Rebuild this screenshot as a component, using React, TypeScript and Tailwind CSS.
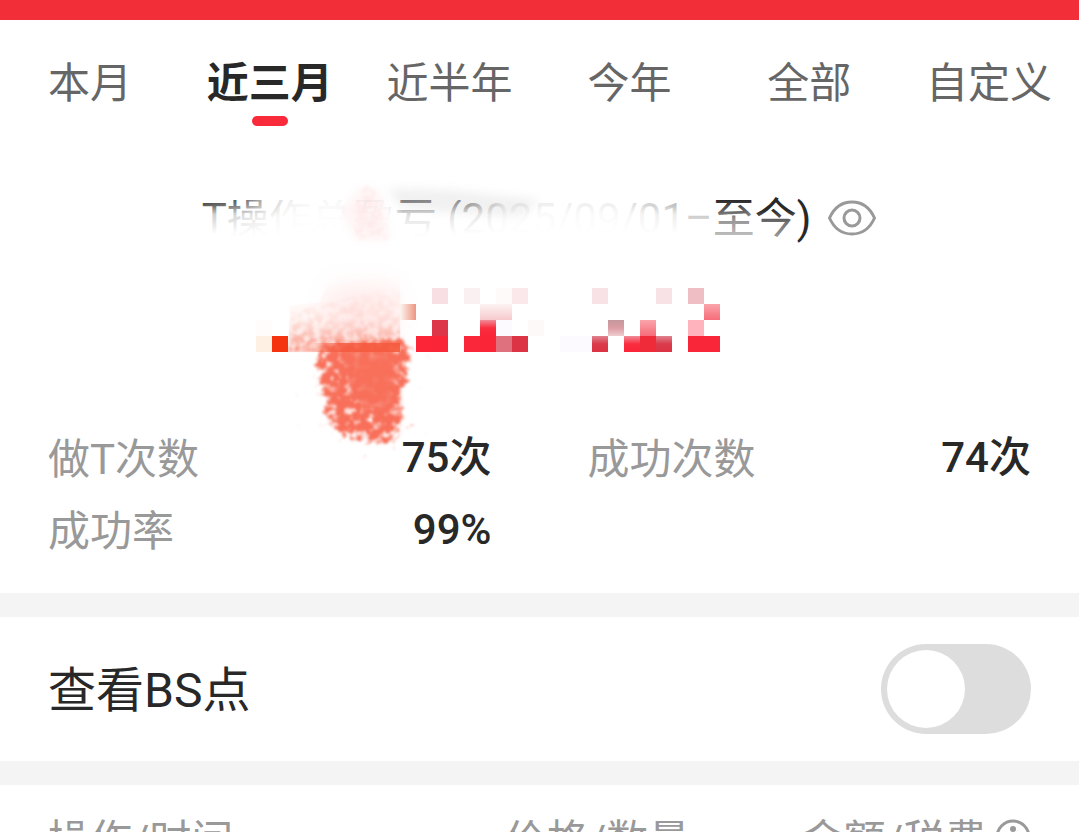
import { useState } from "react";

const tabs = ["本月", "近三月", "近半年", "今年", "全部", "自定义"];

const stats = [
  { label: "做T次数", value: "75次" },
  { label: "成功次数", value: "74次" },
  { label: "成功率", value: "99%" },
];

// x, y, fill of each 16px mosaic tile
const tiles: [number, number, string][] = [
  [432, 288, "#f7dfe3"], [464, 288, "#fbf0f1"], [496, 288, "#fefafa"], [512, 288, "#fae8ea"],
  [592, 288, "#f9e2e5"], [656, 288, "#f9e2e6"], [688, 288, "#efbec4"],
  [400, 304, "url(#tile-warm)"], [480, 304, "url(#tile-pale)"], [496, 304, "url(#tile-pale)"], [704, 304, "url(#tile-rose)"],
  [256, 320, "#fffcfb"], [432, 320, "#dc3648"], [480, 320, "url(#tile-red)"], [496, 320, "#fdfaff"], [528, 320, "#fdf9f8"],
  [608, 320, "url(#tile-mauve)"], [640, 320, "url(#tile-rose)"], [688, 320, "#ffb3bc"],
  [256, 336, "#fff0e4"], [272, 336, "#f5330f"], [416, 336, "#fc2437"], [432, 336, "#fb2538"],
  [464, 336, "#f92739"], [480, 336, "#fb2538"], [496, 336, "#df717f"], [512, 336, "#dc3444"],
  [560, 336, "#fdfaff"], [576, 336, "#fdfaff"], [592, 336, "url(#tile-crimson)"],
  [624, 336, "url(#tile-red)"], [640, 336, "#ef2b39"], [656, 336, "url(#tile-crimson)"],
  [688, 336, "#f82638"], [704, 336, "#f82638"],
];

function Smudge() {
  return (
    <svg
      aria-hidden="true"
      viewBox="180 170 720 290"
      className="pointer-events-none absolute left-1/2 top-0 h-[290px] w-[720px] -translate-x-1/2"
    >
      <defs>
        <filter id="grain" x="-10%" y="-10%" width="120%" height="120%">
          <feTurbulence type="fractalNoise" baseFrequency="0.14" numOctaves="3" seed="4" result="n" />
          <feColorMatrix in="n" type="matrix" values="0 0 0 0 0  0 0 0 0 0  0 0 0 0 0  4 0 0 0 -1.5" result="a" />
          <feComposite in="SourceGraphic" in2="a" operator="in" />
          <feGaussianBlur stdDeviation="1" />
        </filter>
        <filter id="mottle" x="-20%" y="-20%" width="140%" height="140%">
          <feTurbulence type="fractalNoise" baseFrequency="0.13" numOctaves="3" seed="11" result="n" />
          <feGaussianBlur in="SourceAlpha" stdDeviation="5" result="b" />
          <feColorMatrix in="n" type="matrix" values="0 0 0 0 0  0 0 0 0 0  0 0 0 0 0  1 0 0 0 0" result="na" />
          <feComposite in="b" in2="na" operator="arithmetic" k1="0" k2="1.9" k3="3" k4="-2.4" result="m" />
          <feFlood floodColor="#f8705a" />
          <feComposite in2="m" operator="in" />
          <feGaussianBlur stdDeviation="1.2" />
        </filter>
        <filter id="soft" x="-40%" y="-50%" width="180%" height="200%">
          <feGaussianBlur stdDeviation="14" />
        </filter>
        <filter id="haze" x="-30%" y="-80%" width="160%" height="260%">
          <feGaussianBlur stdDeviation="5" />
        </filter>
        <linearGradient id="fade-down" x1="0" y1="0" x2="0" y2="1">
          <stop offset="0" stopColor="#fff" stopOpacity="0" />
          <stop offset="0.15" stopColor="#fff" stopOpacity="0.2" />
          <stop offset="0.4" stopColor="#fff" stopOpacity="0.75" />
          <stop offset="0.9" stopColor="#fff" stopOpacity="0.98" />
        </linearGradient>
        <linearGradient id="fade-end" x1="0" y1="0" x2="0" y2="1">
          <stop offset="0" stopColor="#fff" stopOpacity="0" />
          <stop offset="0.4" stopColor="#fff" stopOpacity="0.5" />
          <stop offset="1" stopColor="#fff" stopOpacity="0.85" />
        </linearGradient>
        <linearGradient id="fade-right" x1="0" y1="0" x2="1" y2="0">
          <stop offset="0" stopColor="#fff" stopOpacity="0" />
          <stop offset="0.1" stopColor="#fff" stopOpacity="0.25" />
          <stop offset="0.16" stopColor="#fff" stopOpacity="0.75" />
          <stop offset="0.23" stopColor="#fff" stopOpacity="0.93" />
          <stop offset="0.4" stopColor="#fff" stopOpacity="0.93" />
          <stop offset="0.43" stopColor="#fff" stopOpacity="0.4" />
          <stop offset="0.56" stopColor="#fff" stopOpacity="0.5" />
          <stop offset="0.64" stopColor="#fff" stopOpacity="0.92" />
          <stop offset="0.86" stopColor="#fff" stopOpacity="0.92" />
          <stop offset="1" stopColor="#fff" stopOpacity="0.6" />
        </linearGradient>
        <linearGradient id="body-fill" x1="0" y1="0" x2="0" y2="1">
          <stop offset="0" stopColor="#f98b78" stopOpacity="0" />
          <stop offset="0.55" stopColor="#f9a090" stopOpacity="0.22" />
          <stop offset="1" stopColor="#f77e68" stopOpacity="0.75" />
        </linearGradient>
        <linearGradient id="rim" x1="0" y1="0" x2="1" y2="0">
          <stop offset="0" stopColor="#f5593d" stopOpacity="0" />
          <stop offset="0.35" stopColor="#f5593d" stopOpacity="0.8" />
          <stop offset="1" stopColor="#f5593d" stopOpacity="0.85" />
        </linearGradient>
        <linearGradient id="tile-warm" x1="0" y1="0" x2="1" y2="0">
          <stop offset="0" stopColor="#fdf5f2" /><stop offset="1" stopColor="#ee9580" />
        </linearGradient>
        <linearGradient id="tile-pale" x1="0" y1="0" x2="0" y2="1">
          <stop offset="0" stopColor="#fdf3f3" /><stop offset="1" stopColor="#f7c9cd" />
        </linearGradient>
        <linearGradient id="tile-rose" x1="0" y1="0" x2="0" y2="1">
          <stop offset="0" stopColor="#fba4ab" /><stop offset="1" stopColor="#f66d79" />
        </linearGradient>
        <linearGradient id="tile-red" x1="0" y1="0" x2="0" y2="1">
          <stop offset="0" stopColor="#f08b98" /><stop offset="0.5" stopColor="#fa2c3e" /><stop offset="1" stopColor="#fb2538" />
        </linearGradient>
        <linearGradient id="tile-mauve" x1="0" y1="0" x2="0" y2="1">
          <stop offset="0" stopColor="#c4989d" /><stop offset="0.5" stopColor="#dc9ca4" /><stop offset="1" stopColor="#efcdd1" />
        </linearGradient>
        <linearGradient id="tile-crimson" x1="0" y1="0" x2="0" y2="1">
          <stop offset="0" stopColor="#e0828e" /><stop offset="0.5" stopColor="#da3b4c" /><stop offset="1" stopColor="#dc3444" />
        </linearGradient>
      </defs>

      <rect x="190" y="200" width="524" height="36" fill="url(#fade-down)" />
      <rect x="190" y="236" width="524" height="16" fill="#fff" />
      <rect x="190" y="180" width="495" height="56" fill="url(#fade-right)" />
      <rect x="280" y="196" width="110" height="40" fill="#fff" opacity="0.5" filter="url(#haze)" />
      <rect x="714" y="200" width="42" height="48" fill="url(#fade-end)" />
      <rect x="756" y="210" width="41" height="32" fill="url(#fade-end)" opacity="0.7" />
      <rect x="190" y="180" width="524" height="20" fill="#fff" />

      <path d="M388 188 L450 190 L540 200 L520 216 L450 213 L400 207Z" fill="#777" opacity="0.1" filter="url(#haze)" />
      <path d="M362 186 L380 192 L390 240 L356 240 L342 210Z" fill="#f77" opacity="0.08" filter="url(#haze)" />
      <path d="M366 184 L376 192 L388 240 L358 240 L350 215Z" fill="#f77" opacity="0.06" filter="url(#grain)" />
      <rect x="330" y="285" width="65" height="55" fill="#f77" opacity="0.1" filter="url(#soft)" />

      <path d="M290 306 L320 302 L328 285 L400 275 L400 352 L288 352Z" fill="url(#body-fill)" opacity="0.4" />
      <path d="M292 312 L400 285 L400 351 L288 351Z" fill="url(#body-fill)" filter="url(#grain)" />
      <path
        d="M318 344 L406 336 L412 352 L408 380 L402 398 L405 420 L398 442 L376 445 L343 440 L326 422 L324 398 L315 380Z"
        filter="url(#mottle)"
      />
      <path d="M336 350 L398 350 L394 412 L360 408Z" fill="#f8705a" opacity="0.9" filter="url(#haze)" />
      <rect x="310" y="343" width="90" height="9" fill="url(#rim)" />

      <g shapeRendering="crispEdges">
        {tiles.map(([x, y, fill]) => (
          <rect key={`${x}-${y}`} x={x} y={y} width="16" height="16" fill={fill} />
        ))}
      </g>
    </svg>
  );
}

export default function App() {
  const [active, setActive] = useState("近三月");
  const [showPoints, setShowPoints] = useState(false);

  return (
    <div className="flex h-screen flex-col overflow-hidden bg-white font-[Roboto,'Noto_Sans_CJK_SC',sans-serif] text-[42px] font-[390] text-[#282828]">
      <header className="h-5 shrink-0 bg-[#f22f38]" />

      <nav className="grid shrink-0 grid-cols-6 pt-[34px]">
        {tabs.map((tab) => (
          <button
            key={tab}
            type="button"
            aria-pressed={tab === active}
            onClick={() => setActive(tab)}
            className="flex flex-col items-center whitespace-nowrap leading-[60px] text-[#666] aria-pressed:font-bold aria-pressed:text-[#282828]"
          >
            {tab}
            <span className={tab === active ? "mt-[2px] h-[10px] w-9 rounded-full bg-[#f92a3a]" : "mt-[2px] h-[10px] w-9"} />
          </button>
        ))}
      </nav>

      <section className="relative mt-11 shrink-0">
        <div className="flex h-24 items-center justify-center gap-4">
          <h1 className="whitespace-nowrap">T操作总盈亏 (2025/09/01–至今)</h1>
          <button type="button" aria-label="隐藏金额" className="relative z-10">
            <svg viewBox="0 0 50 36" className="h-9 w-[50px]" fill="none" stroke="#999" strokeWidth="3">
              <path d="M2.500 18C7 8 15 2 25 2s18 6 22.500 16C43 28 35 34 25 34S7 28 2.500 18Z" />
              <circle cx="25" cy="18" r="8" />
            </svg>
          </button>
        </div>
        <Smudge />
        <dl className="relative grid grid-cols-2 gap-x-24 px-12 pb-[25px] pt-[158px] leading-[72px]">
          {stats.map(({ label, value }) => (
            <div key={label} className="flex justify-between whitespace-nowrap">
              <dt className="text-[#999]">{label}</dt>
              <dd className="font-medium leading-[68px]">{value}</dd>
            </div>
          ))}
        </dl>
      </section>

      <div className="h-6 shrink-0 bg-[#f4f4f4]" />

      <label className="flex h-36 shrink-0 items-center justify-between px-12 text-5xl">
        <span className="pt-1">查看BS点</span>
        <input
          type="checkbox"
          role="switch"
          checked={showPoints}
          onChange={(e) => setShowPoints(e.target.checked)}
          className="h-[90px] w-[150px] appearance-none rounded-full bg-[#ddd] p-[6px] before:block before:size-[78px] before:rounded-full before:bg-white checked:bg-[#f22f38] checked:before:ml-auto"
        />
      </label>

      <div className="h-6 shrink-0 bg-[#f4f4f4]" />

      <div className="shrink-0 px-12 pt-[26px]">
        <table className="w-full table-fixed leading-[60px] text-[#999]">
          <thead>
            <tr className="whitespace-nowrap">
              <th scope="col" className="text-left font-[390]">操作/时间</th>
              <th scope="col" className="pl-[116px] text-center font-[390]">价格/数量</th>
              <th scope="col" className="font-[390]">
                <span className="flex items-start justify-end gap-2">
                  金额/税费
                  <svg viewBox="0 0 36 36" className="mt-2 size-9" fill="none" stroke="#999" strokeWidth="3" role="img" aria-label="说明">
                    <circle cx="18" cy="18" r="16" />
                    <circle cx="18" cy="10" r="3" fill="#999" stroke="none" />
                    <path d="M18 16v12" />
                  </svg>
                </span>
              </th>
            </tr>
          </thead>
        </table>
      </div>
    </div>
  );
}
